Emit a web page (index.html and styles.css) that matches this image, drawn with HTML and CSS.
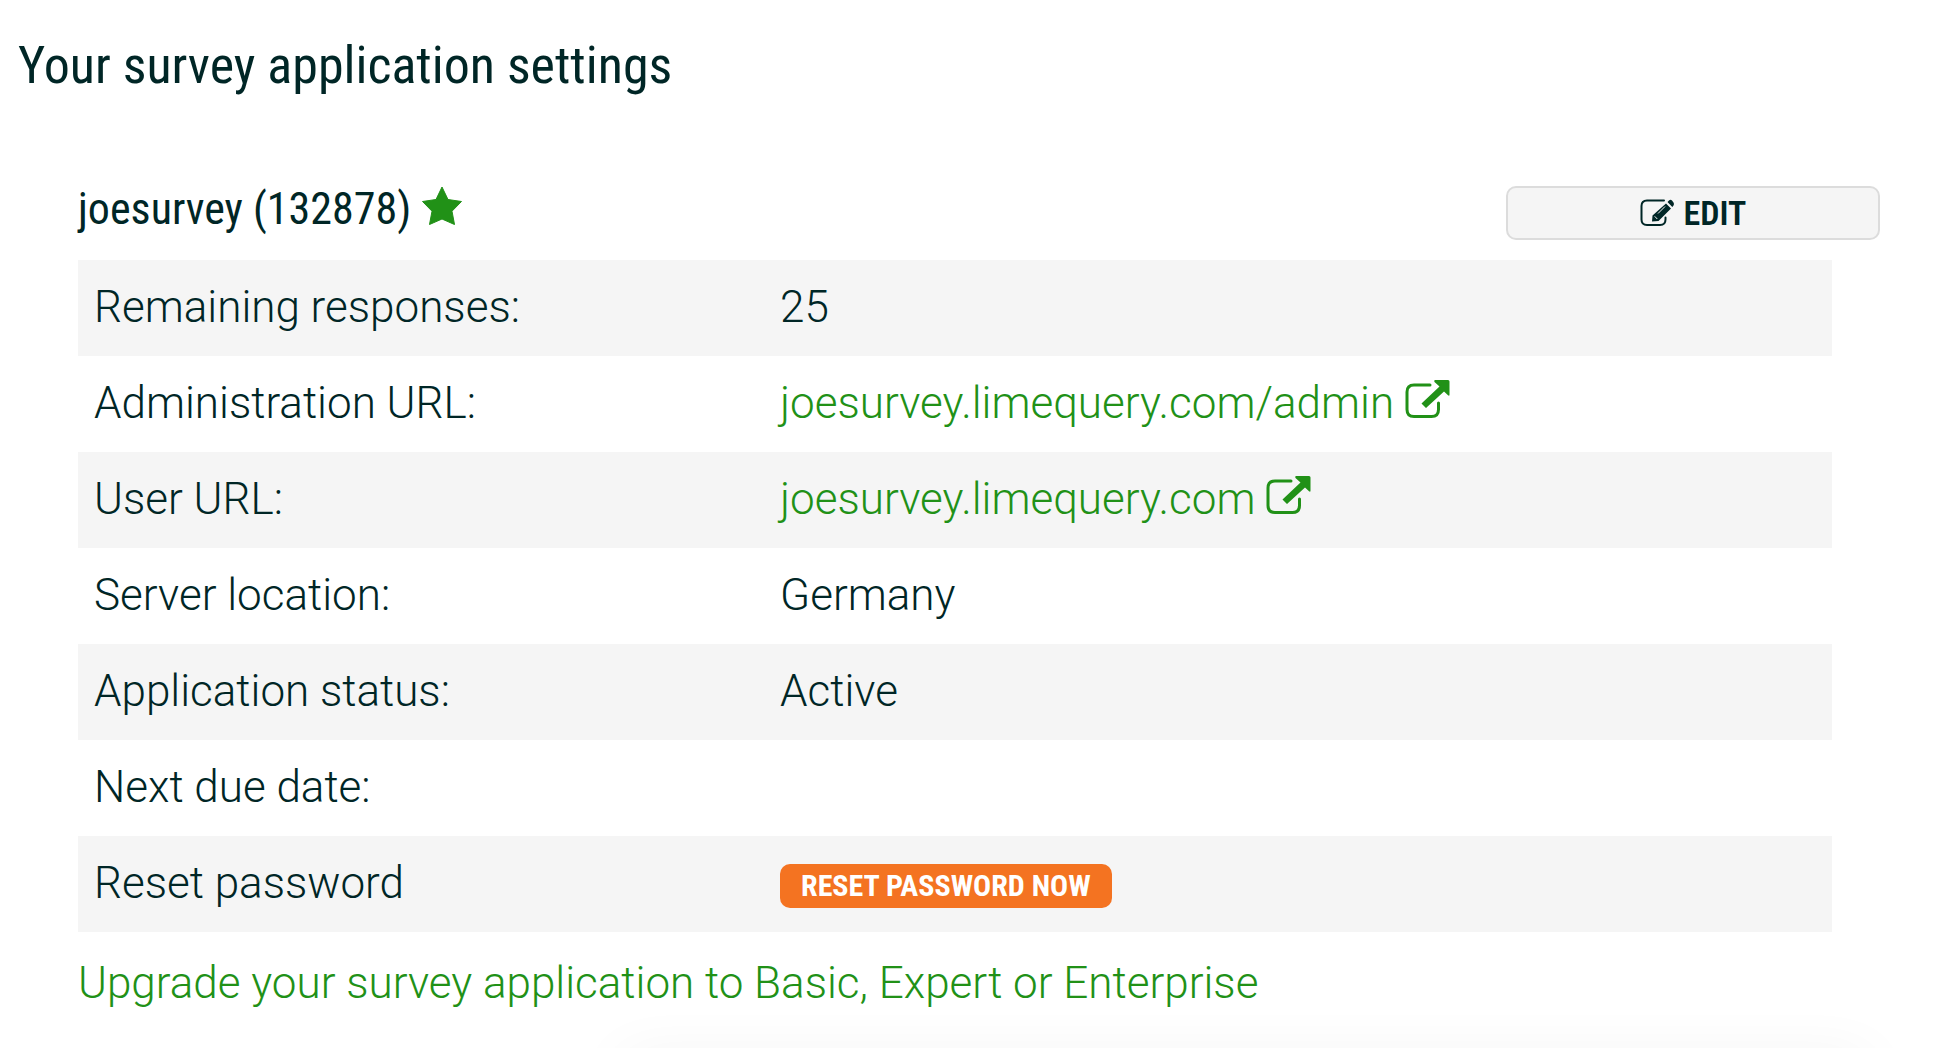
FILE: index.html
```html
<!DOCTYPE html>
<html lang="en">
<head>
<meta charset="utf-8">
<title>Your survey application settings</title>
<link rel="stylesheet" href="styles.css">
</head>
<body>
<main class="page">
  <h1 class="page-title">Your survey application settings</h1>
  <section class="application">
    <header class="application-header">
      <h2 class="application-name">joesurvey (132878)
        <svg class="icon-star" viewBox="0 0 42 40" aria-hidden="true"><path d="M21 1 27 13.500 40.500 15.500 31 25.200 33.500 38.500 21 33 8.500 38.500 11 25.200 1.500 15.500 15 13.500Z"/></svg>
      </h2>
      <button class="edit-button" type="button">
        <svg class="icon-edit" viewBox="0 0 35 28" aria-hidden="true">
          <path class="outline" d="M24 1.500H7Q1.500 1.500 1.500 7V20.500Q1.500 26 7 26H20Q25.500 26 25.500 20.500V18.500"/>
          <path class="solid" d="M26 4.500 31 9.500 18.500 22 12 22.500 12.500 16.500Z M27.500 3 29 1.500Q30.500 0 32 1.500L33.500 3.500Q34.500 5 33.500 6.500L32.300 8Z"/>
          <path class="gap" d="M18 14.500 25 7.500M14.700 17.300 17.300 20"/>
        </svg>
        <span>EDIT</span>
      </button>
    </header>
    <table class="settings">
      <tbody>
        <tr><th scope="row">Remaining responses:</th><td>25</td></tr>
        <tr><th scope="row">Administration URL:</th><td><a href="#admin">joesurvey.limequery.com/admin <svg class="icon-external" viewBox="0 0 45 39" aria-hidden="true"><path class="outline" d="M25 5H9Q2 5 2 12V29.500Q2 36.500 9 36.500H26.500Q33.500 36.500 33.500 29.500V23"/><path class="solid" d="M30 0H43Q44.500 0 44.500 1.500V14.500Q44.500 16.500 43 15.300L39 11.500 21 28 16.500 23.500 34.500 6.500 29.500 2Q28.500 .5 30 0Z"/></svg></a></td></tr>
        <tr><th scope="row">User URL:</th><td><a href="#user">joesurvey.limequery.com <svg class="icon-external" viewBox="0 0 45 39" aria-hidden="true"><path class="outline" d="M25 5H9Q2 5 2 12V29.500Q2 36.500 9 36.500H26.500Q33.500 36.500 33.500 29.500V23"/><path class="solid" d="M30 0H43Q44.500 0 44.500 1.500V14.500Q44.500 16.500 43 15.300L39 11.500 21 28 16.500 23.500 34.500 6.500 29.500 2Q28.500 .5 30 0Z"/></svg></a></td></tr>
        <tr><th scope="row">Server location:</th><td>Germany</td></tr>
        <tr><th scope="row">Application status:</th><td>Active</td></tr>
        <tr><th scope="row">Next due date:</th><td></td></tr>
        <tr><th scope="row">Reset password</th><td><button class="reset-button" type="button">RESET PASSWORD NOW</button></td></tr>
      </tbody>
    </table>
    <a class="upgrade-link" href="#upgrade">Upgrade your survey application to Basic, Expert or Enterprise</a>
  </section>
  <div class="bottom-shade"></div>
</main>
</body>
</html>
```
FILE: styles.css
```css
* { box-sizing: border-box; }

body {
  margin: 0;
  background: #fff;
  color: #002626;
  font-family: Roboto, "Liberation Sans", sans-serif;
  font-size: 44px;
  font-weight: 300;
  line-height: 60px;
}

a { color: #219117; text-decoration: none; }

.page {
  display: flex;
  flex-direction: column;
  min-height: 100vh;
  padding-top: 32px;
  overflow: hidden;
}

.page-title,
.application-name,
.edit-button,
.reset-button {
  font-family: "Roboto Condensed", Roboto, "Liberation Sans", sans-serif;
}

.page-title {
  margin: 0;
  padding: 0 18px;
  font-size: 52px;
  font-weight: 400;
  line-height: 68px;
}

.application { padding: 78px 72px 0 78px; }

.application-header {
  display: flex;
  align-items: flex-start;
  justify-content: space-between;
  height: 82px;
  padding-top: 8px;
}

.application-name {
  display: flex;
  align-items: flex-start;
  gap: 10px;
  margin: 0;
  font-size: 44px;
  font-weight: 400;
  line-height: 46px;
}

.icon-star {
  width: 42px;
  height: 40px;
  fill: #219117;
  stroke: #219117;
  stroke-linejoin: round;
}

.edit-button {
  display: flex;
  align-items: center;
  justify-content: center;
  gap: 9px;
  width: 374px;
  height: 54px;
  padding: 0;
  border: 2px solid #dcdcdc;
  border-radius: 10px;
  background: #f5f5f5;
  color: inherit;
  font-size: 34px;
  font-weight: 600;
}

.icon-edit { width: 35px; height: 28px; }
.icon-edit .outline { fill: none; stroke: #002626; stroke-width: 2; stroke-linecap: round; }
.icon-edit .solid { fill: #002626; }
.icon-edit .gap { fill: none; stroke: #f5f5f5; stroke-width: 1; }

.settings {
  width: calc(100% - 48px);
  border-collapse: collapse;
  table-layout: fixed;
}

.settings tr { height: 96px; }
.settings tr:nth-child(odd) { background: #f5f5f5; }

.settings th,
.settings td {
  padding: 0 16px 2px;
  font-weight: 300;
  text-align: left;
}

.settings th { width: 39%; }
.settings td { padding-left: 18px; }

.icon-external { width: 45px; height: 39px; vertical-align: -1px; }
.icon-external .outline { fill: none; stroke: #219117; stroke-width: 3; stroke-linecap: round; }
.icon-external .solid { fill: #219117; }

.reset-button {
  display: block;
  height: 44px;
  margin-top: 6px;
  padding: 0 21px;
  border: 0;
  border-radius: 10px;
  background: #f47321;
  color: #fff;
  font-size: 30px;
  font-weight: 700;
  line-height: 44px;
}

.upgrade-link { display: block; margin-top: 21px; }

.bottom-shade {
  height: 40px;
  margin: auto 84px -50px 622px;
  box-shadow: 0 0 60px rgba(0, 0, 0, 0.06);
}
```
